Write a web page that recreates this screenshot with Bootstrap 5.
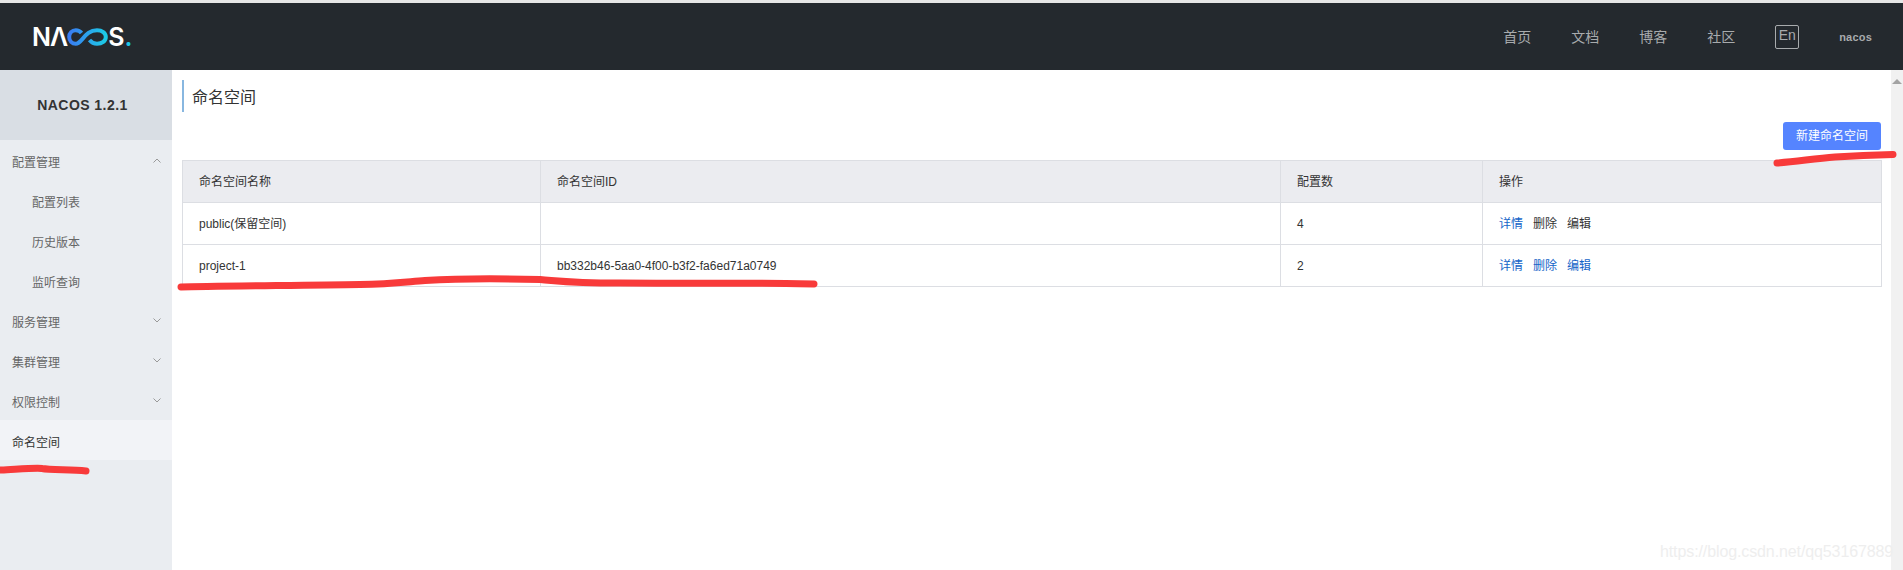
<!DOCTYPE html>
<html lang="zh">
<head>
<meta charset="utf-8">
<title>Nacos</title>
<link href="https://cdn.jsdelivr.net/npm/bootstrap@5.3.0/dist/css/bootstrap.min.css" rel="stylesheet">
<style>
html,body{height:570px;overflow:hidden}
body{font-family:"Liberation Sans","Noto Sans CJK SC",sans-serif;font-size:12px;color:#333;background:#fff;position:relative}
.top-strip{height:3px;background:#e6e6e6}
.top-head{height:67px;background:#24292e;padding-left:32px;padding-right:31px}
.brand-mark{color:#fff;font-family:"Inter","Liberation Sans",sans-serif;font-weight:600;font-size:25px;line-height:1;height:18px;letter-spacing:-1px}
.brand-mark .ltr{display:inline-block;line-height:18px}
.brand-dot{color:#1cc6e6;margin-left:1px}
.head-link{color:#a8abad;font-size:14px;line-height:20px;text-decoration:none;width:28px;white-space:nowrap}
.head-nav{gap:40px}
.lang-box{border:1px solid #a8abad;border-radius:2px;color:#a8abad;font-size:14px;width:24px;height:24px;line-height:18px;text-align:center;margin-right:40px}
.user-name{color:#a8abad;font-size:11px;font-weight:700;letter-spacing:.2px;margin-top:2px}
.body-row{height:500px}
.side-panel{width:172px;background:#eaedf1;flex:none}
.side-title{height:70px;background:#d9dee4;font-weight:700;font-size:14px;letter-spacing:.45px;color:#333;padding:1px 7px 0 0}
.side-item{height:40px;padding:5px 11px 0 12px;color:#666;font-size:12px}
.side-sub{padding-left:32px}
.side-on{background:#f2f3f7;color:#333}
.main-pane{padding:10px 10px 0 10px;min-width:0}
.pane-title{border-left:2px solid #88b7e0;height:32px;padding:2px 0 0 8px;font-size:16px;line-height:32px;color:#333}
.add-wrap{height:48px;padding-top:10px}
.add-btn{background:#5584ff;border:0;border-radius:3px;color:#fff;font-size:12px;width:98px;height:28px;padding:1px 0 0;line-height:27px}
.ns-table{table-layout:fixed;width:1699px;margin:0;font-size:12px;color:#333;border-color:#dcdee3;--bs-table-border-color:#dcdee3}
.ns-table th,.ns-table td{height:42px;padding:0 16px;vertical-align:middle;font-weight:400;line-height:16px;border-color:#dcdee3}
.ns-table td{padding-top:1px}
.ns-table th{background:#ebecf0;--bs-table-bg:#ebecf0}
.op-link{color:#1464c8;text-decoration:none;margin-right:10px}
.op-dark{color:#333}
.scroll-rail{width:12px;background:#f1f1f1;flex:none;padding-top:9px}
.scroll-up{width:0;height:0;border-left:5px solid transparent;border-right:5px solid transparent;border-bottom:5px solid #a3a3a3;margin-left:1px}
.ink-layer{position:absolute;left:0;top:0;pointer-events:none}
.wm-text{position:absolute;left:1660px;top:540px;font-size:16px;line-height:24px;letter-spacing:-.11px;color:#eeeeee;white-space:nowrap}
</style>
</head>
<body>
<div class="top-strip"></div>
<header class="top-head d-flex align-items-center justify-content-between">
  <div class="brand-mark d-flex align-items-center">
    <span class="ltr">N</span><span class="ltr">Λ</span>
    <svg width="41" height="18" viewBox="0 0 41 18" fill="none" aria-hidden="true">
      <defs><linearGradient id="lg" x1="0" x2="1" y1="0" y2="0"><stop offset="0" stop-color="#3a7cf2"/><stop offset="1" stop-color="#1ccbe6"/></linearGradient></defs>
      <path d="M14.500 5C13 3 11 2.200 8.800 2.200C5 2.200 2.200 5 2.200 9C2.200 13 5 15.800 8.800 15.800C15 15.800 18 2.200 30 2.200C35 2.200 38.800 5 38.800 9C38.800 13 35 15.800 30 15.800C27 15.800 24.500 14.500 22.500 12" stroke="url(#lg)" stroke-width="4"/>
    </svg>
    <span class="ltr">S</span><span class="ltr brand-dot">.</span>
  </div>
  <nav class="d-flex align-items-center head-nav">
    <a class="head-link" href="#">首页</a>
    <a class="head-link" href="#">文档</a>
    <a class="head-link" href="#">博客</a>
    <a class="head-link" href="#">社区</a>
    <div class="d-flex align-items-center">
      <span class="lang-box">En</span>
      <span class="user-name">nacos</span>
    </div>
  </nav>
</header>
<div class="body-row d-flex">
  <aside class="side-panel">
    <div class="side-title d-flex align-items-center justify-content-center">NACOS 1.2.1</div>
    <div class="side-item d-flex align-items-center justify-content-between"><span>配置管理</span>
      <svg width="8" height="5" viewBox="0 0 8 5" fill="none" class="mb-1"><path d="M.5 4.500L4 1L7.500 4.500" stroke="#999" stroke-width="1"/></svg></div>
    <div class="side-item side-sub d-flex align-items-center">配置列表</div>
    <div class="side-item side-sub d-flex align-items-center">历史版本</div>
    <div class="side-item side-sub d-flex align-items-center">监听查询</div>
    <div class="side-item d-flex align-items-center justify-content-between"><span>服务管理</span>
      <svg width="8" height="5" viewBox="0 0 8 5" fill="none" class="mb-1"><path d="M.5 .5L4 4L7.500 .5" stroke="#999" stroke-width="1"/></svg></div>
    <div class="side-item d-flex align-items-center justify-content-between"><span>集群管理</span>
      <svg width="8" height="5" viewBox="0 0 8 5" fill="none" class="mb-1"><path d="M.5 .5L4 4L7.500 .5" stroke="#999" stroke-width="1"/></svg></div>
    <div class="side-item d-flex align-items-center justify-content-between"><span>权限控制</span>
      <svg width="8" height="5" viewBox="0 0 8 5" fill="none" class="mb-1"><path d="M.5 .5L4 4L7.500 .5" stroke="#999" stroke-width="1"/></svg></div>
    <div class="side-item side-on d-flex align-items-center">命名空间</div>
  </aside>
  <main class="main-pane flex-grow-1">
    <div class="pane-title">命名空间</div>
    <div class="add-wrap d-flex justify-content-end"><button class="btn add-btn" type="button">新建命名空间</button></div>
    <table class="table table-bordered ns-table">
      <colgroup><col style="width:358px"><col style="width:740px"><col style="width:202px"><col style="width:399px"></colgroup>
      <thead><tr><th>命名空间名称</th><th>命名空间ID</th><th>配置数</th><th>操作</th></tr></thead>
      <tbody>
        <tr><td>public(保留空间)</td><td></td><td>4</td><td><a class="op-link" href="#">详情</a><a class="op-link op-dark" href="#">删除</a><a class="op-link op-dark" href="#">编辑</a></td></tr>
        <tr><td>project-1</td><td>bb332b46-5aa0-4f00-b3f2-fa6ed71a0749</td><td>2</td><td><a class="op-link" href="#">详情</a><a class="op-link" href="#">删除</a><a class="op-link" href="#">编辑</a></td></tr>
      </tbody>
    </table>
  </main>
  <div class="scroll-rail"><div class="scroll-up"></div></div>
</div>
<div class="wm-text">https://blog.csdn.net/qq53167889</div>
<svg class="ink-layer" width="1903" height="570" fill="none" stroke="#f83a3a" stroke-linecap="round" stroke-linejoin="round" aria-hidden="true">
  <path stroke-width="7" d="M181 287C210 286 300 285.500 360 284.500C390 284 405 282 425 280.500C450 279 500 278.500 540 279.500C560 281 570 283 620 283C700 283.500 770 282.500 814 284"/>
  <path stroke-width="7" d="M1777 163C1800 161 1815 158.500 1835 157C1860 155.500 1875 155 1893 154.500"/>
  <path stroke-width="7" d="M1 470C20 469 38 467.500 42 468.500C50 470 70 469.500 86 471"/>
</svg>
</body>
</html>
